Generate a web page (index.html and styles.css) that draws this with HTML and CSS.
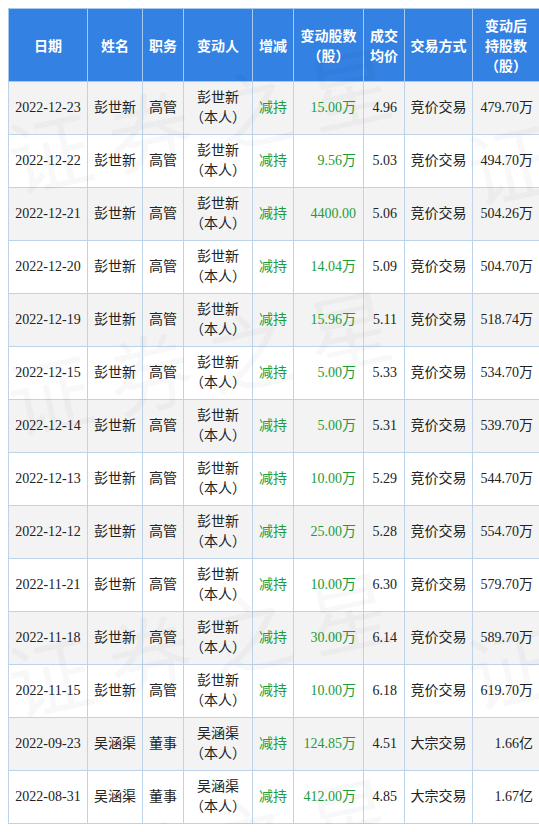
FILE: index.html
```html
<!DOCTYPE html>
<html lang="zh-CN">
<head>
    <meta charset="UTF-8">
    <title>高管增减持明细</title>
    <link rel="stylesheet" href="styles.css">
</head>
<body>

    <div class="page">
        <table class="trade-table">
            <colgroup>
                <col class="c-date">
                <col class="c-name">
                <col class="c-title">
                <col class="c-person">
                <col class="c-change">
                <col class="c-shares">
                <col class="c-price">
                <col class="c-method">
                <col class="c-hold">
            </colgroup>
            <thead>
                <tr>
                    <th>日期</th>
                    <th>姓名</th>
                    <th>职务</th>
                    <th>变动人</th>
                    <th>增减</th>
                    <th>变动股数（股）</th>
                    <th>成交均价</th>
                    <th>交易方式</th>
                    <th class="hold-head">变动后持股数（股）</th>
                </tr>
            </thead>
            <tbody id="rows"></tbody>
        </table>

        <div class="watermark">
            <span class="wm wm-a">证券之星</span>
            <span class="wm wm-b">证券之星</span>
            <span class="wm wm-c">证券之星</span>
            <span class="wm wm-d">证券之星</span>
            <span class="wm wm-e">证券之星</span>
            <span class="wm wm-f">证券之星</span>
        </div>
    </div>

<script>
    const trades = [
        ["2022-12-23", "彭世新", "高管", "15.00万", "4.96", "竞价交易", "479.70万"],
        ["2022-12-22", "彭世新", "高管", "9.56万", "5.03", "竞价交易", "494.70万"],
        ["2022-12-21", "彭世新", "高管", "4400.00", "5.06", "竞价交易", "504.26万"],
        ["2022-12-20", "彭世新", "高管", "14.04万", "5.09", "竞价交易", "504.70万"],
        ["2022-12-19", "彭世新", "高管", "15.96万", "5.11", "竞价交易", "518.74万"],
        ["2022-12-15", "彭世新", "高管", "5.00万", "5.33", "竞价交易", "534.70万"],
        ["2022-12-14", "彭世新", "高管", "5.00万", "5.31", "竞价交易", "539.70万"],
        ["2022-12-13", "彭世新", "高管", "10.00万", "5.29", "竞价交易", "544.70万"],
        ["2022-12-12", "彭世新", "高管", "25.00万", "5.28", "竞价交易", "554.70万"],
        ["2022-11-21", "彭世新", "高管", "10.00万", "6.30", "竞价交易", "579.70万"],
        ["2022-11-18", "彭世新", "高管", "30.00万", "6.14", "竞价交易", "589.70万"],
        ["2022-11-15", "彭世新", "高管", "10.00万", "6.18", "竞价交易", "619.70万"],
        ["2022-09-23", "吴涵渠", "董事", "124.85万", "4.51", "大宗交易", "1.66亿"],
        ["2022-08-31", "吴涵渠", "董事", "412.00万", "4.85", "大宗交易", "1.67亿"]
    ];

    const tbody = document.getElementById("rows");
    trades.forEach(t => {
        tbody.innerHTML += `
            <tr>
                <td>${t[0]}</td>
                <td>${t[1]}</td>
                <td>${t[2]}</td>
                <td>${t[1]}（本人）</td>
                <td class="down">减持</td>
                <td class="down num">${t[3]}</td>
                <td class="num">${t[4]}</td>
                <td>${t[5]}</td>
                <td class="num last">${t[6]}</td>
            </tr>
        `;
    });
</script>

</body>
</html>
```

FILE: styles.css
```css
body {
    margin: 8px 0 0 8px;
    font-family: "Liberation Serif", "Noto Sans CJK SC", serif;
    font-size: 14px;
    color: #222;
    background: #fff;
}

.page {
    position: relative;
    width: 531px;
    overflow: hidden;
}

.trade-table {
    width: 531px;
    table-layout: fixed;
    border-collapse: collapse;
    border: 1px solid #bcd3ea;
}

.c-date { width: 79px; }
.c-name { width: 55px; }
.c-title { width: 41px; }
.c-person { width: 69px; }
.c-change { width: 41px; }
.c-shares { width: 70px; }
.c-price { width: 41px; }
.c-method { width: 68px; }
.c-hold { width: 67px; }

th, td {
    border: 1px solid #bcd3ea;
    padding: 6px 4px;
    line-height: 20px;
    text-align: center;
    vertical-align: middle;
}

th {
    background-color: #3381e2;
    color: #fff;
    font-weight: bold;
    font-family: "Noto Sans CJK SC", sans-serif;
    border-color: #a9c8ee;
}

th.hold-head {
    padding: 6px 7px;
}

tbody tr:nth-child(odd) td {
    background-color: #f3f3f3;
}

tbody tr:nth-child(even) td {
    background-color: #fff;
}

.down {
    color: #1f9c3a;
}

.num {
    text-align: right;
    padding-right: 7px;
}

.last {
    padding-right: 6px;
}

/* faint site watermark laid over the table */
.watermark {
    position: absolute;
    top: -8px;
    left: 0;
    width: 531px;
    height: 832px;
    overflow: hidden;
    pointer-events: none;
}

.wm {
    position: absolute;
    font-family: "Noto Sans CJK SC", sans-serif;
    font-size: 84px;
    line-height: 84px;
    letter-spacing: 18px;
    white-space: nowrap;
    color: rgba(0, 0, 0, 0.028);
    transform: rotate(-12deg);
    transform-origin: left center;
}

.wm-a { left: 0; top: 116px; }
.wm-b { left: 459px; top: 128px; }
.wm-c { left: 0; top: 358px; }
.wm-d { left: 0; top: 640px; }
.wm-e { left: 459px; top: 632px; }
.wm-f { left: 0; top: 846px; }
```
